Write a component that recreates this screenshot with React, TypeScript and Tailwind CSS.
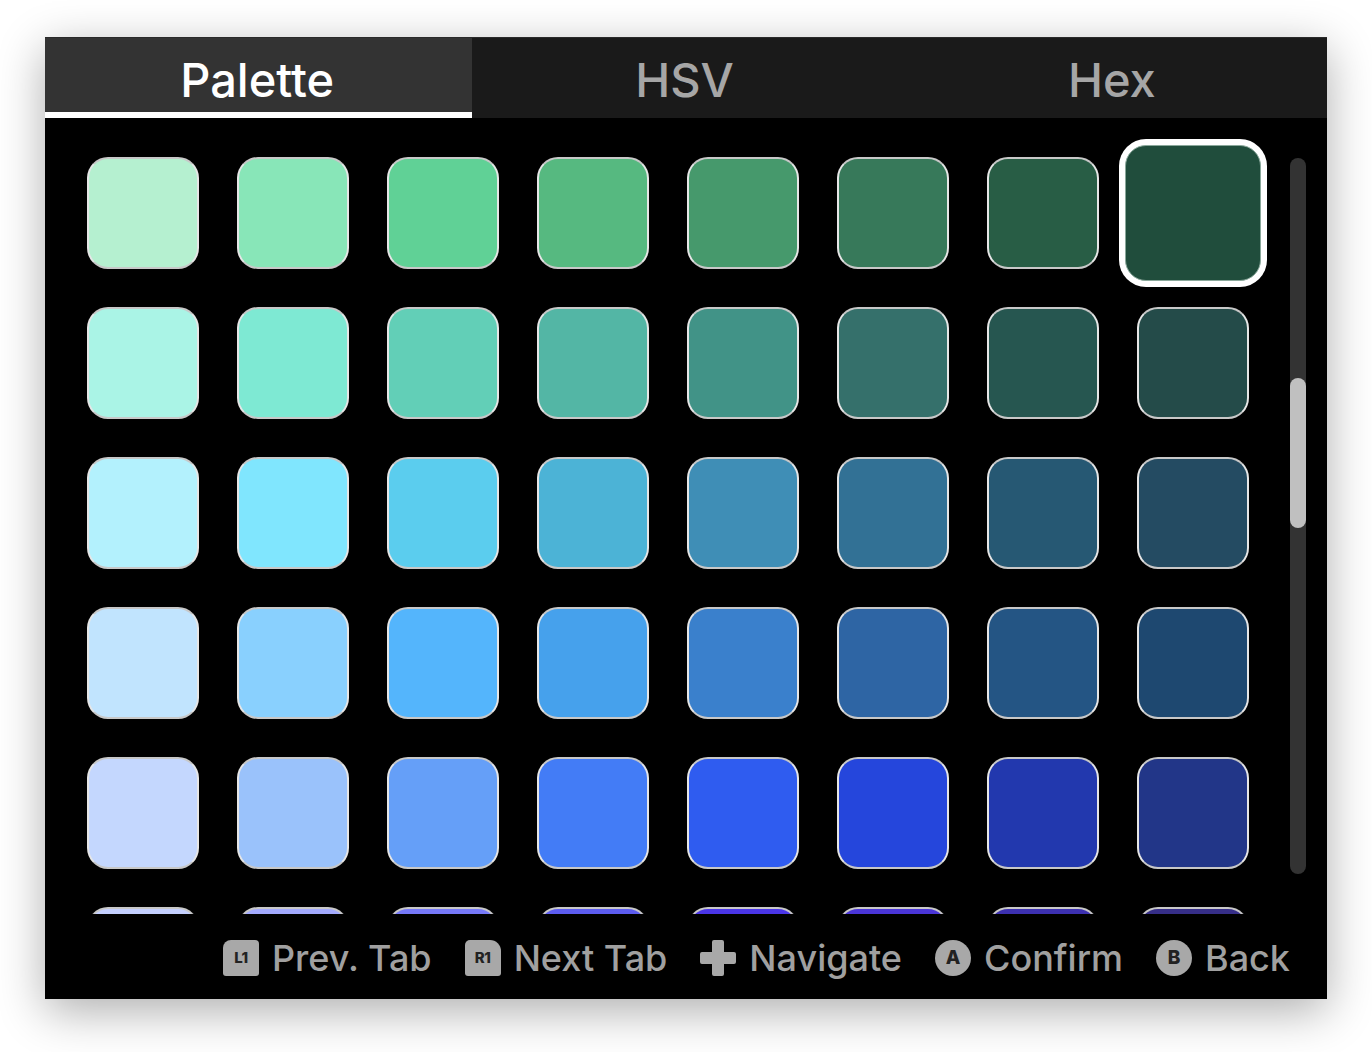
const font = { fontFamily: "Inter, 'Liberation Sans', sans-serif" }

const rows = [
  ["#b5f0d0", "#88e6b8", "#60d196", "#56b980", "#46996c", "#37795a", "#285d45", "#204d3c"],
  ["#aaf4e6", "#7ee9d3", "#62cfb7", "#53b6a5", "#419387", "#35706b", "#265650", "#244b49"],
  ["#b3f1fd", "#80e6fe", "#5bcdee", "#4cb3d6", "#3f8eb6", "#327195", "#265873", "#244b62"],
  ["#c1e4fe", "#89d0fe", "#54b5fc", "#46a1ec", "#3a80cc", "#2e65a4", "#245584", "#1e4870"],
  ["#c4d7fe", "#9ac2fb", "#659ff8", "#437cf6", "#2f5cf0", "#2546dc", "#2238ae", "#223688"],
  ["#c4cffe", "#a3aafe", "#7679f9", "#5c5cf0", "#4a35e8", "#4a35d8", "#3c30b0", "#362e88"],
]

function Swatch({ color, selected }: { color: string; selected: boolean }) {
  return (
    <div className="w-[150px] h-[150px] flex items-center justify-center shrink-0">
      {selected ? (
        <div className="w-[148px] h-[148px] rounded-[27px] bg-white p-[6px]">
          <div className="w-full h-full rounded-[21px] border border-[#8aa89b]" style={{ backgroundColor: color }} />
        </div>
      ) : (
        <div
          className="w-[112px] h-[112px] rounded-[21px] border-2 border-x-[#e6e6e6] border-y-[#c8c8c8]"
          style={{ backgroundColor: color }}
        />
      )}
    </div>
  )
}

function Tab({ label, active }: { label: string; active?: boolean }) {
  return (
    <div
      className={
        active
          ? "flex-1 h-full flex items-center justify-center pt-[10px] pr-[3px] bg-[#333333] border-b-[6px] border-white text-white font-medium text-[47px]"
          : "flex-1 h-full flex items-center justify-center pt-[4px] pr-[3px] text-[#a6a6a6] font-medium text-[47px]"
      }
    >
      {label}
    </div>
  )
}

function PlusIcon() {
  return (
    <svg width="36" height="36" viewBox="0 0 36 36" className="shrink-0">
      <path
        d="M12 2a2 2 0 0 1 2-2h8a2 2 0 0 1 2 2v10h10a2 2 0 0 1 2 2v8a2 2 0 0 1-2 2H24v10a2 2 0 0 1-2 2h-8a2 2 0 0 1-2-2V24H2a2 2 0 0 1-2-2v-8a2 2 0 0 1 2-2h10z"
        fill="#a8a8a8"
      />
    </svg>
  )
}

function Hint({ icon, label }: { icon: React.ReactNode; label: string }) {
  return (
    <div className="flex items-center gap-[13px]">
      {icon}
      <span className="text-[#a0a0a0] text-[36px] font-medium leading-none">{label}</span>
    </div>
  )
}

function KeyCap({ label, shape }: { label: string; shape: "l" | "r" }) {
  return (
    <div
      className={
        shape === "l"
          ? "w-9 h-9 shrink-0 bg-[#a8a8a8] rounded-tl-[8px] rounded-tr-[4px] rounded-b-[3px] flex items-center justify-center text-[#222222] text-[15px] font-extrabold tracking-[-0.5px]"
          : "w-9 h-9 shrink-0 bg-[#a8a8a8] rounded-tr-[11px] rounded-tl-[5px] rounded-b-[3px] flex items-center justify-center text-[#222222] text-[15px] font-extrabold tracking-[-0.5px]"
      }
    >
      {label}
    </div>
  )
}

function Round({ label }: { label: string }) {
  return (
    <div className="w-9 h-9 shrink-0 bg-[#a8a8a8] rounded-full flex items-center justify-center text-[#222222] text-[19px] font-extrabold">
      {label}
    </div>
  )
}

export default function App() {
  return (
    <div className="w-[1372px] h-[1052px] bg-white pt-[37px] pl-[45px] overflow-hidden" style={font}>
      <div className="w-[1282px] h-[962px] flex flex-col bg-black border-t border-[#2a2a2a] shadow-[0_12px_44px_rgba(0,0,0,0.32)]">
        {/* tabs */}
        <div className="h-[80px] shrink-0 flex bg-[#1a1a1a]">
          <Tab label="Palette" active />
          <Tab label="HSV" />
          <Tab label="Hex" />
        </div>

        {/* swatches + scrollbar */}
        <div className="h-[796px] shrink-0 flex pl-[23px] pt-[20px] overflow-hidden">
          <div className="w-[1200px] shrink-0 flex flex-col">
            {rows.map((row, r) => (
              <div key={r} className="flex shrink-0">
                {row.map((c, i) => (
                  <Swatch key={c} color={c} selected={r === 0 && i === 7} />
                ))}
              </div>
            ))}
          </div>
          <div className="w-4 h-[716px] ml-[22px] mt-5 shrink-0 rounded-full bg-[#333333] pt-[220px]">
            <div className="w-4 h-[150px] rounded-full bg-[#c0c0c0]" />
          </div>
        </div>

        {/* button hints */}
        <div className="flex-1 flex items-center justify-end gap-[33px] pr-[37px] pt-[3px]">
          <Hint icon={<KeyCap label="L1" shape="l" />} label="Prev. Tab" />
          <Hint icon={<KeyCap label="R1" shape="r" />} label="Next Tab" />
          <Hint icon={<PlusIcon />} label="Navigate" />
          <Hint icon={<Round label="A" />} label="Confirm" />
          <Hint icon={<Round label="B" />} label="Back" />
        </div>
      </div>
    </div>
  )
}
